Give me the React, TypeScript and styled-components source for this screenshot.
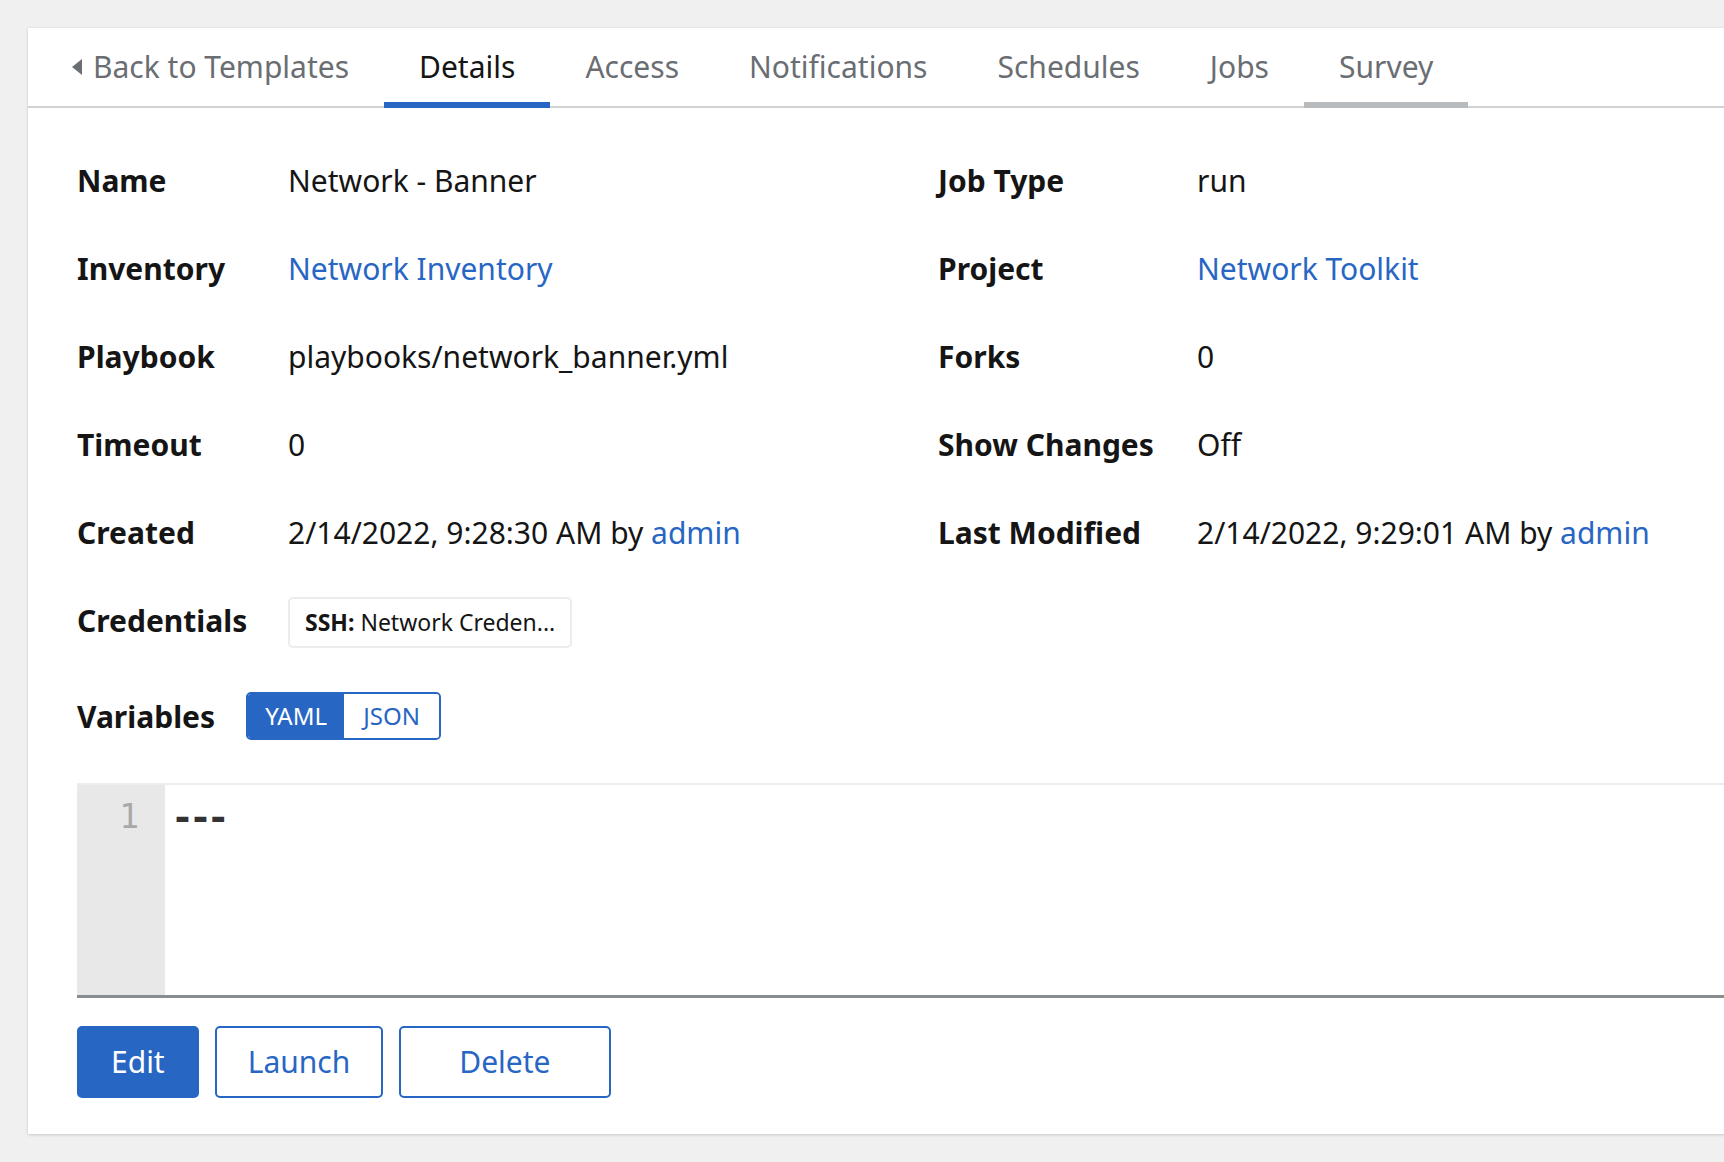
import React from "react";
import styled, { createGlobalStyle } from "styled-components";

const BLUE = "#2866c4";
const TEXT = "#151515";

const GlobalStyle = createGlobalStyle`
  html, body {
    margin: 0;
    padding: 0;
    background: #f0f0f0;
    overflow: hidden;
  }
  body {
    font-family: "Noto Sans", "Open Sans", sans-serif;
    color: ${TEXT};
  }
  * { box-sizing: border-box; }
`;

const Page = styled.div`
  width: 1724px;
  height: 1162px;
  padding: 28px 0 0 28px;
  overflow: hidden;
`;

const Card = styled.section`
  width: 1740px;
  height: 1106px;
  background: #fff;
  box-shadow: 0 1px 3px rgba(3, 3, 3, 0.14), 0 0 2px rgba(3, 3, 3, 0.06);
  display: flex;
  flex-direction: column;
`;

const TabBar = styled.nav`
  display: flex;
  height: 80px;
  padding-left: 8px;
  border-bottom: 2px solid #d2d2d2;
`;

const Tab = styled.button<{ $active?: boolean; $hover?: boolean }>`
  position: relative;
  display: flex;
  align-items: center;
  gap: 10px;
  height: 78px;
  padding: 0 35px;
  border: none;
  background: none;
  font-family: inherit;
  font-size: 30px;
  line-height: 1;
  color: ${(p) => (p.$active ? TEXT : "#6a6e73")};
  cursor: pointer;
  &::after {
    content: "";
    position: absolute;
    left: 0;
    right: 0;
    bottom: -2px;
    height: 6px;
    background: ${(p) => (p.$active ? BLUE : p.$hover ? "#b8bbbe" : "transparent")};
  }
`;

const Caret = styled.svg`
  width: 12px;
  height: 18px;
  fill: #6a6e73;
  flex: none;
`;

const Body = styled.div`
  padding: 28px 0 0 49px;
  display: flex;
  flex-direction: column;
`;

const DetailGrid = styled.dl`
  margin: 0;
  display: grid;
  grid-template-columns: 211px 650px 259px 1fr;
  grid-auto-rows: 88px;
  align-items: center;
`;

const Term = styled.dt`
  font-size: 30px;
  font-weight: 700;
  line-height: 1.3;
  white-space: nowrap;
`;

const Value = styled.dd`
  margin: 0;
  font-size: 30px;
  line-height: 1.3;
  white-space: nowrap;
`;

const Link = styled.a`
  color: ${BLUE};
  text-decoration: none;
`;

const Spacer = styled.div`
  grid-column: span 2;
`;

const Chip = styled.span`
  display: inline-flex;
  align-items: center;
  gap: 6px;
  height: 51px;
  padding: 0 15px;
  border: 2px solid #ececec;
  border-radius: 5px;
  font-size: 23px;
  line-height: 1;
  white-space: nowrap;
  margin-top: 4px;
`;

const Strong = styled.b`
  font-weight: 700;
`;

const VarsRow = styled.div`
  display: flex;
  align-items: center;
  gap: 31px;
  height: 88px;
  margin-top: 8px;
`;

const Toggle = styled.div`
  display: flex;
  height: 48px;
  border: 2px solid ${BLUE};
  border-radius: 5px;
  overflow: hidden;
`;

const ToggleItem = styled.button<{ $selected?: boolean }>`
  width: ${(p) => (p.$selected ? "96px" : "95px")};
  border: none;
  font-family: inherit;
  font-size: 24px;
  line-height: 1;
  padding: 0;
  background: ${(p) => (p.$selected ? BLUE : "#fff")};
  color: ${(p) => (p.$selected ? "#fff" : BLUE)};
`;

const Editor = styled.div`
  margin-top: 23px;
  display: flex;
  height: 215px;
  border-top: 2px solid #ededed;
  border-bottom: 3px solid #8a8d90;
`;

const Gutter = styled.div`
  width: 88px;
  background: #e8e8e8;
  padding: 10px 26px 0 0;
  text-align: right;
  font-family: "DejaVu Sans Mono", "Liberation Mono", monospace;
  font-size: 33px;
  line-height: 44px;
  color: #a8a8a8;
`;

const Code = styled.pre`
  margin: 0;
  padding: 10px 0 0 6px;
  font-family: "DejaVu Sans Mono", "Liberation Mono", monospace;
  font-size: 38px;
  line-height: 44px;
  color: #333;
  font-weight: 700;
  letter-spacing: -5px;
`;

const Actions = styled.div`
  display: flex;
  gap: 16px;
  margin-top: 28px;
`;

const Button = styled.button<{ $primary?: boolean; $pad: number }>`
  height: 72px;
  padding: 0 ${(p) => p.$pad}px;
  border-radius: 5px;
  border: 2px solid ${BLUE};
  background: ${(p) => (p.$primary ? BLUE : "#fff")};
  color: ${(p) => (p.$primary ? "#fff" : BLUE)};
  font-family: inherit;
  font-size: 30px;
  line-height: 1;
  cursor: pointer;
`;

const tabs = ["Details", "Access", "Notifications", "Schedules", "Jobs", "Survey"];

export default function App() {
  return (
    <>
      <GlobalStyle />
      <Page>
        <Card>
          <TabBar>
            <Tab>
              <Caret viewBox="0 0 12 18">
                <path d="M11 1 L1 9 L11 17 Z" />
              </Caret>
              Back to Templates
            </Tab>
            {tabs.map((t) => (
              <Tab key={t} $active={t === "Details"} $hover={t === "Survey"}>
                {t}
              </Tab>
            ))}
          </TabBar>
          <Body>
            <DetailGrid>
              <Term>Name</Term>
              <Value>Network - Banner</Value>
              <Term>Job Type</Term>
              <Value>run</Value>

              <Term>Inventory</Term>
              <Value>
                <Link href="#">Network Inventory</Link>
              </Value>
              <Term>Project</Term>
              <Value>
                <Link href="#">Network Toolkit</Link>
              </Value>

              <Term>Playbook</Term>
              <Value>playbooks/network_banner.yml</Value>
              <Term>Forks</Term>
              <Value>0</Value>

              <Term>Timeout</Term>
              <Value>0</Value>
              <Term>Show Changes</Term>
              <Value>Off</Value>

              <Term>Created</Term>
              <Value>
                2/14/2022, 9:28:30 AM by <Link href="#">admin</Link>
              </Value>
              <Term>Last Modified</Term>
              <Value>
                2/14/2022, 9:29:01 AM by <Link href="#">admin</Link>
              </Value>

              <Term>Credentials</Term>
              <Value>
                <Chip>
                  <Strong>SSH:</Strong>
                  <span>Network Creden...</span>
                </Chip>
              </Value>
              <Spacer />
            </DetailGrid>

            <VarsRow>
              <Term as="span">Variables</Term>
              <Toggle>
                <ToggleItem $selected>YAML</ToggleItem>
                <ToggleItem>JSON</ToggleItem>
              </Toggle>
            </VarsRow>

            <Editor>
              <Gutter>1</Gutter>
              <Code>---</Code>
            </Editor>

            <Actions>
              <Button $primary $pad={32}>Edit</Button>
              <Button $pad={31}>Launch</Button>
              <Button $pad={58}>Delete</Button>
            </Actions>
          </Body>
        </Card>
      </Page>
    </>
  );
}
